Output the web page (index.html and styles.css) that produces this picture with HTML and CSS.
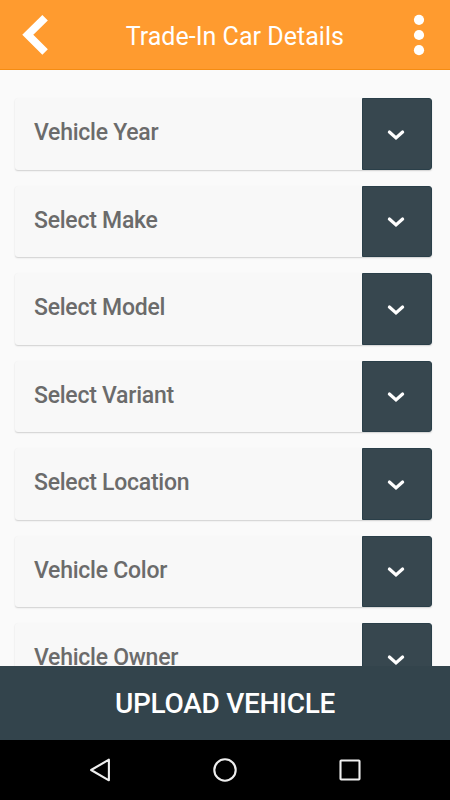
FILE: index.html
```html
<!DOCTYPE html>
<html lang="en">
<head>
<meta charset="utf-8">
<title>Trade-In Car Details</title>
<link rel="stylesheet" href="styles.css">
</head>
<body>
<svg class="defs" width="0" height="0"><symbol id="chevron" viewBox="0 0 18 12"><path d="M2.4 3 9 8.9 15.6 3" fill="none" stroke="#fff" stroke-width="3.2" stroke-linecap="round"/></symbol></svg>
<div class="screen">
  <header class="bar">
    <svg class="back" width="48" height="69" viewBox="0 0 48 69"><path d="M45.1 17.7 27.8 34.8l17.3 17.1" fill="none" stroke="#fff" stroke-width="7.8"/></svg>
    <h1 class="title">Trade-In Car Details</h1>
    <svg class="more" width="20" height="69" viewBox="0 0 20 69" fill="#fff"><circle cx="10" cy="19.8" r="5.1"/><circle cx="10" cy="35" r="5.1"/><circle cx="10" cy="50.2" r="5.1"/></svg>
  </header>
  <main class="list">
    <div class="row"><span class="label">Vehicle Year</span><span class="drop"><svg width="18" height="12"><use href="#chevron"/></svg></span></div>
    <div class="row"><span class="label">Select Make</span><span class="drop"><svg width="18" height="12"><use href="#chevron"/></svg></span></div>
    <div class="row"><span class="label">Select Model</span><span class="drop"><svg width="18" height="12"><use href="#chevron"/></svg></span></div>
    <div class="row"><span class="label">Select Variant</span><span class="drop"><svg width="18" height="12"><use href="#chevron"/></svg></span></div>
    <div class="row"><span class="label">Select Location</span><span class="drop"><svg width="18" height="12"><use href="#chevron"/></svg></span></div>
    <div class="row"><span class="label">Vehicle Color</span><span class="drop"><svg width="18" height="12"><use href="#chevron"/></svg></span></div>
    <div class="row"><span class="label">Vehicle Owner</span><span class="drop"><svg width="18" height="12"><use href="#chevron"/></svg></span></div>
  </main>
  <button class="upload">UPLOAD VEHICLE</button>
  <nav class="nav">
    <svg width="26" height="26" viewBox="0 0 26 26"><path d="M21.9 2.7v20.6L4.1 13z"/></svg>
    <svg width="26" height="26" viewBox="0 0 26 26"><circle cx="13" cy="13" r="10.7"/></svg>
    <svg width="26" height="26" viewBox="0 0 26 26"><rect x="3.5" y="3.5" width="19" height="19" rx=".7"/></svg>
  </nav>
</div>
</body>
</html>
```
FILE: styles.css
```css
* { box-sizing: border-box; }
body {
  margin: 0;
  background: #fafafa;
  font-family: Roboto, "Liberation Sans", sans-serif;
}
.defs { display: block; height: 0; }
.screen {
  display: flex;
  flex-direction: column;
  width: 450px;
  height: 800px;
  overflow: hidden;
}
.bar {
  flex: none;
  display: flex;
  align-items: center;
  height: 70px;
  background: #ff9b2f;
  border-bottom: 1px solid #f58c12;
}
.back { flex: none; }
.title {
  flex: 1;
  margin: 0;
  padding: 5px 0 0 77.7px;
  font-size: 25px;
  font-weight: 400;
  line-height: 30px;
  letter-spacing: 0.03px;
  color: #fff;
  white-space: nowrap;
}
.more { flex: none; margin-right: 21px; }
.list {
  flex: 1;
  min-height: 0;
  overflow: hidden;
  display: flex;
  flex-direction: column;
  gap: 16px;
  padding: 28.3px 17.6px 0 15.4px;
}
.row {
  flex: none;
  display: flex;
  height: 71.5px;
  border-radius: 3px;
  background: #f8f8f8;
  box-shadow: 0 1px 1.5px rgba(0, 0, 0, 0.17);
}
.label {
  flex: 1;
  padding: 19.8px 0 0 18.6px;
  font-size: 23px;
  font-weight: 500;
  line-height: 30px;
  letter-spacing: -0.25px;
  color: #6b6b6b;
}
.drop {
  width: 70.6px;
  display: flex;
  align-items: center;
  justify-content: center;
  padding: 1px 2px 0 0;
  border-radius: 0 3px 3px 0;
  background: #37474f;
  border: 1px solid #2a3f49;
}
.upload {
  flex: none;
  height: 74px;
  border: 0;
  padding: 2px 0 0;
  background: #33444c;
  color: #fff;
  font: 500 28px/32px Roboto, "Liberation Sans", sans-serif;
  letter-spacing: -0.28px;
}
.nav {
  flex: none;
  display: flex;
  justify-content: center;
  align-items: center;
  gap: 99px;
  height: 60px;
  background: #000;
}
.nav svg { fill: none; stroke: #eee; stroke-width: 2.1; stroke-linejoin: round; }
```
